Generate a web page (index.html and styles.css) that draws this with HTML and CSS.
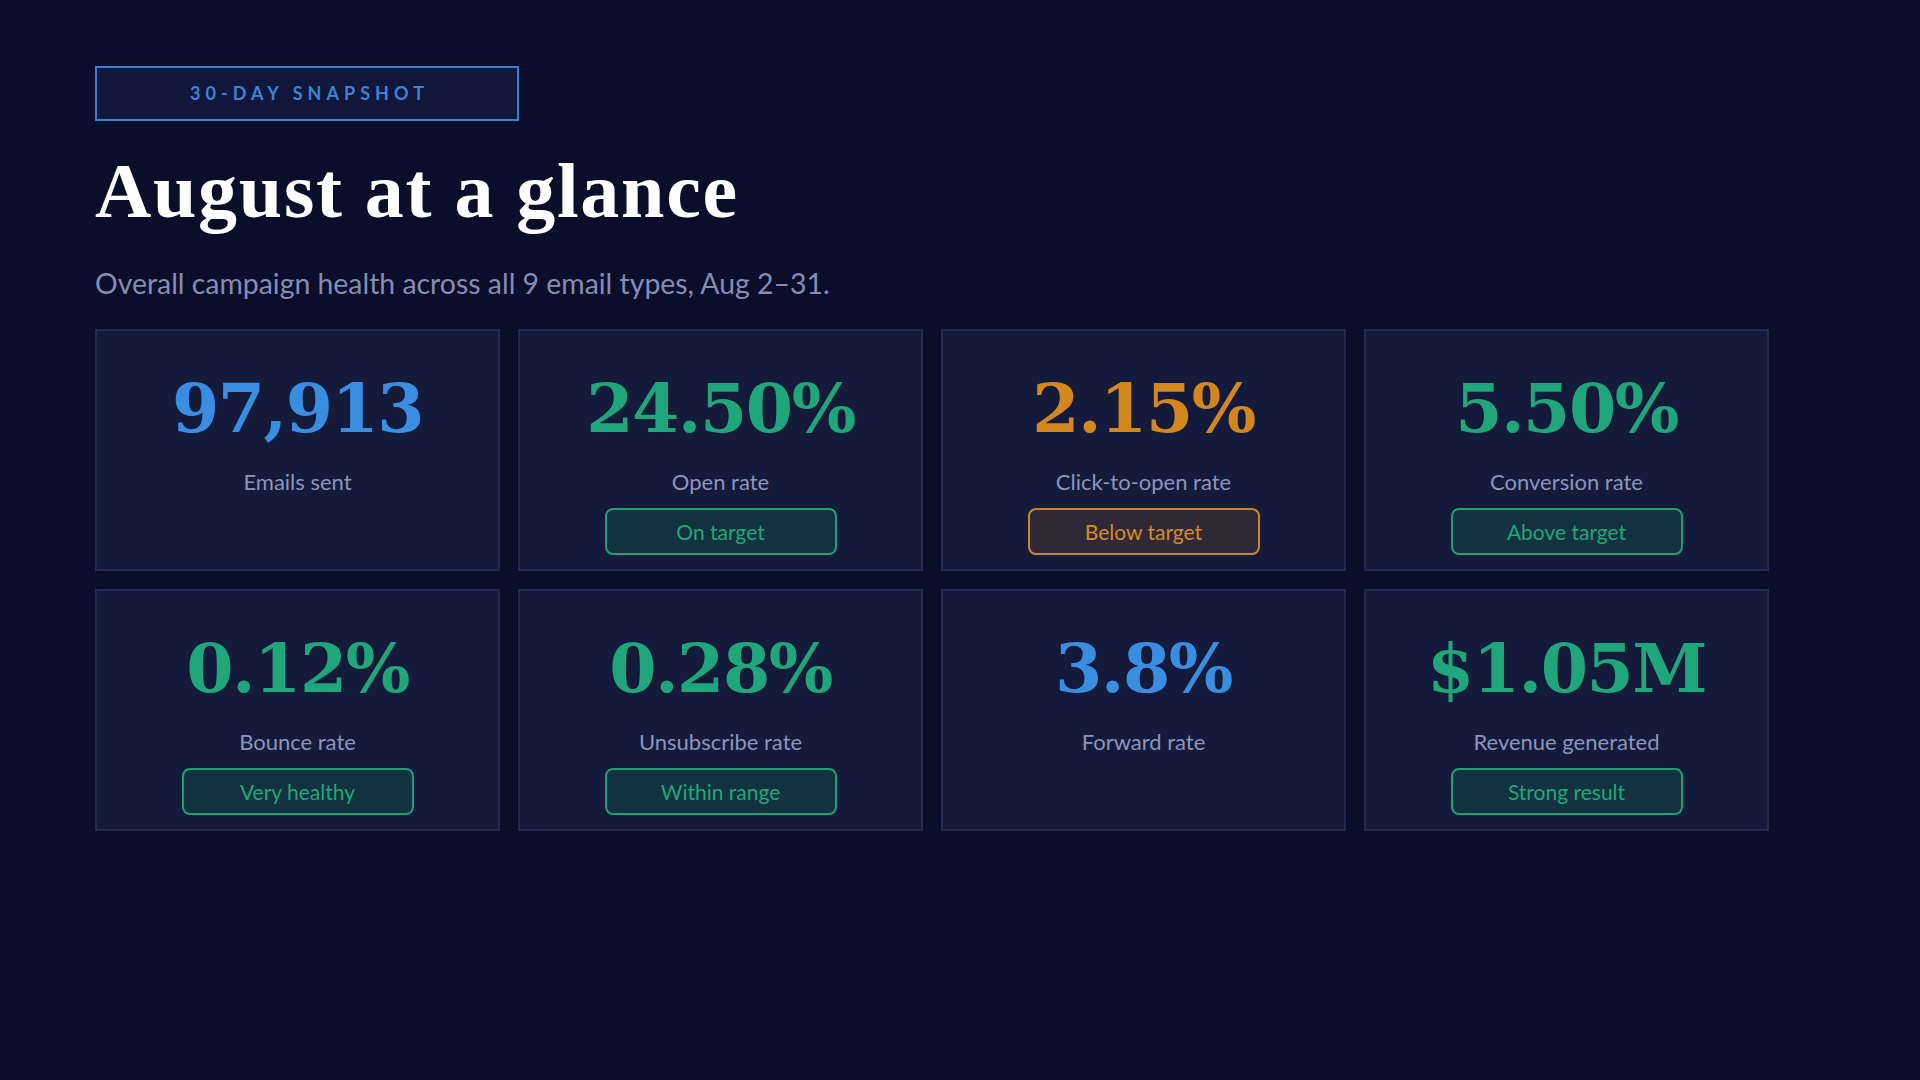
FILE: index.html
```
<!DOCTYPE html>
<html lang="en">
<head>
<meta charset="utf-8">
<title>August at a glance</title>
<link rel="stylesheet" href="styles.css">
</head>
<body>
<main class="page">
  <div class="badge">30-DAY SNAPSHOT</div>
  <h1 class="title">August at a glance</h1>
  <p class="subtitle">Overall campaign health across all 9 email types, Aug 2–31.</p>
  <section class="grid">
    <div class="card">
      <div class="value blue">97,913</div>
      <div class="label">Emails sent</div>
    </div>
    <div class="card">
      <div class="value green">24.50%</div>
      <div class="label">Open rate</div>
      <div class="pill pill-green">On target</div>
    </div>
    <div class="card">
      <div class="value orange">2.15%</div>
      <div class="label">Click-to-open rate</div>
      <div class="pill pill-orange">Below target</div>
    </div>
    <div class="card">
      <div class="value green">5.50%</div>
      <div class="label">Conversion rate</div>
      <div class="pill pill-green">Above target</div>
    </div>
    <div class="card">
      <div class="value green">0.12%</div>
      <div class="label">Bounce rate</div>
      <div class="pill pill-green">Very healthy</div>
    </div>
    <div class="card">
      <div class="value green">0.28%</div>
      <div class="label">Unsubscribe rate</div>
      <div class="pill pill-green">Within range</div>
    </div>
    <div class="card">
      <div class="value blue">3.8%</div>
      <div class="label">Forward rate</div>
    </div>
    <div class="card">
      <div class="value green">$1.05M</div>
      <div class="label">Revenue generated</div>
      <div class="pill pill-green">Strong result</div>
    </div>
  </section>
</main>
</body>
</html>
```

FILE: styles.css
```
* { box-sizing: border-box; }

html, body {
  margin: 0;
  padding: 0;
  background: #0a0e2a;
}

body {
  width: 1920px;
  height: 1080px;
  overflow: hidden;
  font-family: Lato, "Open Sans", sans-serif;
}

.page {
  padding: 66px 0 0 95px;
}

.badge {
  width: 424px;
  height: 55px;
  border: 2px solid #3a7fd2;
  background: #10173a;
  color: #3d84d8;
  font-family: Lato, sans-serif;
  font-weight: 700;
  font-size: 18px;
  letter-spacing: 0.28em;
  padding-left: 0.28em;
  line-height: 51px;
  text-align: center;
}

.title {
  margin: 31px 0 0 0;
  font-family: "Liberation Serif", serif;
  font-weight: 700;
  font-size: 78px;
  line-height: 78px;
  letter-spacing: 1.7px;
  color: #ffffff;
}

.subtitle {
  margin: 36px 0 0 0;
  font-family: Lato, sans-serif;
  font-size: 28.4px;
  line-height: 34px;
  color: #858db4;
}

.grid {
  margin-top: 29px;
  display: grid;
  grid-template-columns: repeat(4, 405px);
  grid-auto-rows: 242px;
  gap: 18px;
}

.card {
  background: #131a3a;
  border: 2px solid #222a52;
  display: flex;
  flex-direction: column;
  align-items: center;
  padding-top: 43px;
}

.value {
  font-family: "DejaVu Serif", serif;
  font-weight: 700;
  font-size: 68px;
  line-height: 68px;
  letter-spacing: -1.5px;
}

.blue { color: #3a8ee2; }
.green { color: #1fa67a; }
.orange { color: #d4871d; }

.label {
  margin-top: 26px;
  font-size: 22px;
  line-height: 28px;
  color: #8d95bd;
}

.pill {
  margin-top: 12px;
  width: 232px;
  height: 47px;
  border: 2px solid;
  border-radius: 8px;
  font-size: 21px;
  line-height: 43px;
  text-align: center;
}

.pill-green {
  border-color: #1f9f78;
  background: #12323f;
  color: #22a67b;
}

.pill-orange {
  border-color: #d08524;
  background: #2f2937;
  color: #d98b24;
}
```
